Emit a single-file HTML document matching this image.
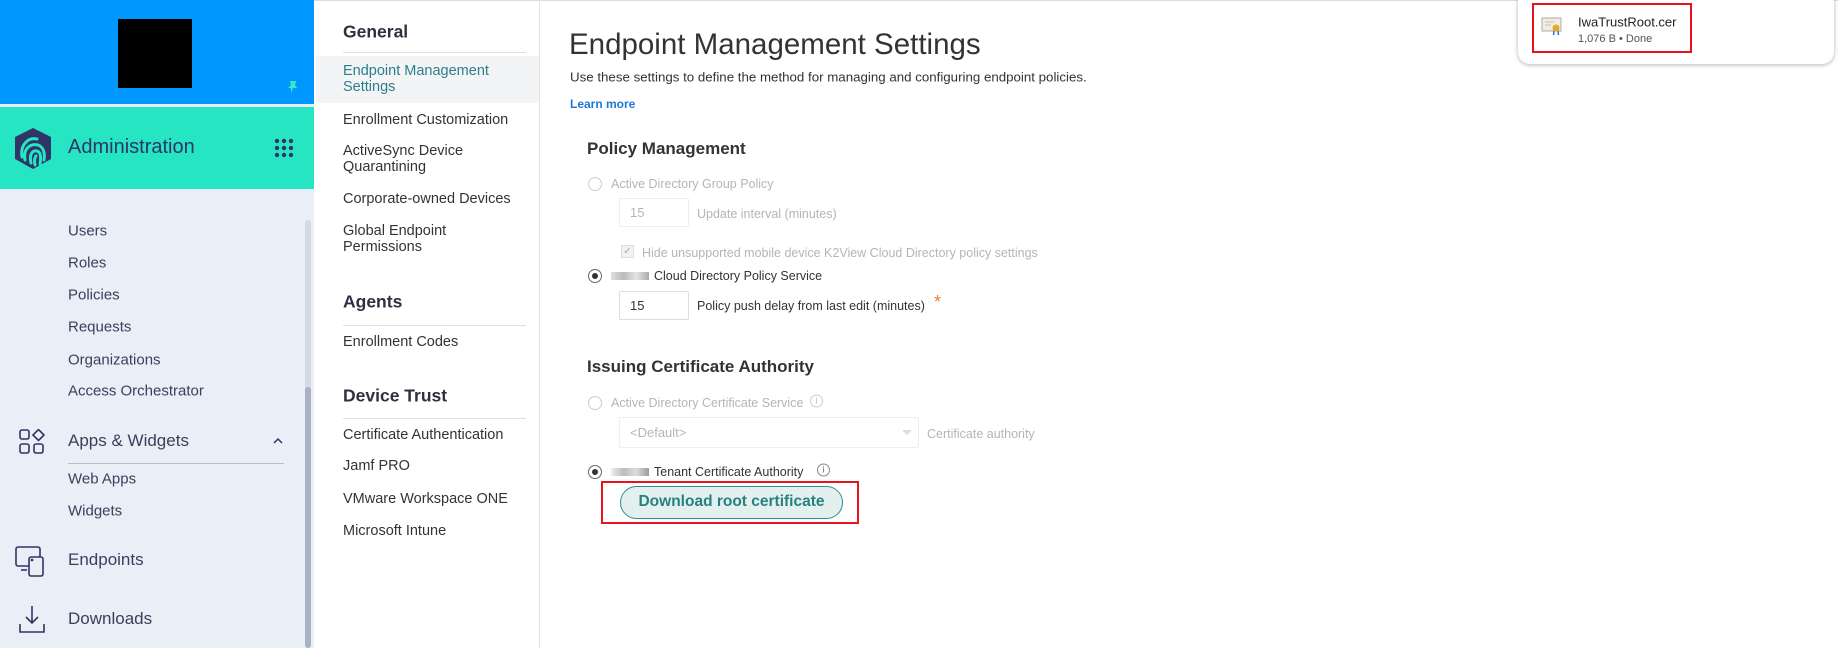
<!DOCTYPE html>
<html><head><meta charset="utf-8"><style>
*{margin:0;padding:0;box-sizing:border-box}
body{width:1838px;height:648px;overflow:hidden;background:#fff;font-family:"Liberation Sans","DejaVu Sans",sans-serif;color:#333;position:relative}
.a{position:absolute;white-space:nowrap}
.side{left:0;top:0;width:314px;height:648px;background:#eaeef6}
.si{left:68px;font-size:15px;color:#3b3f5c;transform:translateY(-50%)}
.c2{font-size:14.5px;color:#333;left:343px;transform:translateY(-50%)}
.h2{font-size:17.5px;font-weight:bold;color:#2f3140;left:343px;transform:translateY(-50%)}
.ln{height:1px;background:#dde1ea}
.lbl{font-size:12.5px;transform:translateY(-50%)}
.dis{color:#b5b5b5}
.radio{width:14px;height:14px;border:1px solid #ccc;border-radius:50%;transform:translateY(-50%)}
.radio.on{border-color:#666}
.radio.on::after{content:"";position:absolute;left:3px;top:3px;width:6px;height:6px;border-radius:50%;background:#333}
.inp{border:1px solid #ddd;border-radius:2px;font-size:13px;padding:6px 0 0 10px}
.blur{height:8px;background:linear-gradient(90deg,#ddd,#bbb,#e5e5e5,#aaa);transform:translateY(-50%)}
.info{width:13px;height:13px;border:1px solid #888;border-radius:50%;font-size:9px;text-align:center;line-height:11px;color:#666;transform:translateY(-50%)}
</style></head><body>
<div class="a" style="left:0;top:0;width:1838px;height:1px;background:#ddd"></div>
<div class="a side"></div>
<div class="a" style="left:0;top:0;width:314px;height:104px;background:#0098ff"></div>
<div class="a" style="left:118px;top:19px;width:74px;height:69px;background:#000"></div>
<svg class="a" style="left:286px;top:80px" width="12" height="14" viewBox="0 0 12 14"><path d="M4 1H10L9 5L11 8H7L5 13L5 8H2L5 5Z" fill="#3ee6c4"/></svg>
<div class="a" style="left:0;top:107px;width:314px;height:82px;background:#26e5c2"></div>
<svg class="a" style="left:12px;top:127px" width="42" height="43" viewBox="0 0 42 43"><path d="M21 1L39 10V32L21 42L3 32V10Z" fill="#2f3566"/><path d="M10 30C8 18 16 10 25 12M13 33C11 22 18 16 26 18C32 20 33 27 32 33M19 36C17 28 20 23 25 24C29 25 29 31 28 37M23 38C22 33 23 30 24 29" stroke="#26e5c2" stroke-width="3" fill="none" stroke-linecap="round"/></svg>
<div class="a" style="left:68px;top:136px;font-size:20px;color:#2f3566">Administration</div>
<svg class="a" style="left:274px;top:138px" width="20" height="20"><g fill="#2f3566"><circle cx="3" cy="3" r="2.2"/><circle cx="10" cy="3" r="2.2"/><circle cx="17" cy="3" r="2.2"/><circle cx="3" cy="10" r="2.2"/><circle cx="10" cy="10" r="2.2"/><circle cx="17" cy="10" r="2.2"/><circle cx="3" cy="17" r="2.2"/><circle cx="10" cy="17" r="2.2"/><circle cx="17" cy="17" r="2.2"/></g></svg>
<div class="a" style="left:305px;top:220px;width:6px;height:428px;background:#d5dbe6;border-radius:3px"></div>
<div class="a" style="left:305px;top:387px;width:6px;height:261px;background:#a9b1c2;border-radius:3px"></div>
<div class="a si" style="top:231px">Users</div>
<div class="a si" style="top:263px">Roles</div>
<div class="a si" style="top:295px">Policies</div>
<div class="a si" style="top:327px">Requests</div>
<div class="a si" style="top:360px">Organizations</div>
<div class="a si" style="top:391px">Access Orchestrator</div>
<svg class="a" style="left:19px;top:429px" width="26" height="26" viewBox="0 0 26 26" fill="none" stroke="#2f3566" stroke-width="1.6"><rect x="1" y="1" width="9" height="9" rx="2"/><rect x="1" y="15" width="9" height="9" rx="2"/><rect x="15" y="15" width="9" height="9" rx="2"/><path d="M19.5 0.5L25 6L19.5 11.5L14 6Z"/></svg>
<div class="a si" style="top:441px;font-size:17px">Apps &amp; Widgets</div>
<svg class="a" style="left:273px;top:437px" width="10" height="7"><path d="M1 6L5 2L9 6" stroke="#2f3566" stroke-width="1.5" fill="none"/></svg>
<div class="a" style="left:68px;top:463px;width:216px;height:1px;background:#b8bfce"></div>
<div class="a si" style="top:479px">Web Apps</div>
<div class="a si" style="top:511px">Widgets</div>
<svg class="a" style="left:15px;top:546px" width="32" height="32" viewBox="0 0 32 32" fill="none" stroke="#2f3566" stroke-width="1.6"><rect x="1" y="1" width="24" height="19" rx="2"/><path d="M6 24H12"/><rect x="14" y="11" width="14" height="19" rx="2" fill="#eaeef6"/><circle cx="17" cy="14" r=".6"/></svg>
<div class="a si" style="top:560px;font-size:17px">Endpoints</div>
<svg class="a" style="left:19px;top:605px" width="26" height="29" viewBox="0 0 26 29" fill="none" stroke="#2f3566" stroke-width="1.6"><path d="M13 1V18M7 12L13 18L19 12M1 19V27H25V19"/></svg>
<div class="a si" style="top:619px;font-size:17px">Downloads</div>

<div class="a" style="left:539px;top:0;width:1px;height:648px;background:#e3e3e3"></div>
<div class="a h2" style="top:32px">General</div>
<div class="a ln" style="left:343px;top:52px;width:183px"></div>
<div class="a" style="left:316px;top:56px;width:223px;height:47px;background:#f3f4f6"></div>
<div class="a" style="left:343px;top:63px;font-size:14.5px;color:#2b7f8a;line-height:16px">Endpoint Management<br>Settings</div>
<div class="a c2" style="top:120px">Enrollment Customization</div>
<div class="a" style="left:343px;top:143px;font-size:14.5px;line-height:16px">ActiveSync Device<br>Quarantining</div>
<div class="a c2" style="top:199px">Corporate-owned Devices</div>
<div class="a" style="left:343px;top:223px;font-size:14.5px;line-height:16px">Global Endpoint<br>Permissions</div>
<div class="a h2" style="top:302px">Agents</div>
<div class="a ln" style="left:343px;top:325px;width:183px"></div>
<div class="a c2" style="top:342px">Enrollment Codes</div>
<div class="a h2" style="top:396px">Device Trust</div>
<div class="a ln" style="left:343px;top:418px;width:183px"></div>
<div class="a c2" style="top:435px">Certificate Authentication</div>
<div class="a c2" style="top:466px">Jamf PRO</div>
<div class="a c2" style="top:499px">VMware Workspace ONE</div>
<div class="a c2" style="top:531px">Microsoft Intune</div>

<div class="a" style="left:569px;top:45px;font-size:29.5px;color:#333;transform:translateY(-50%)">Endpoint Management Settings</div>
<div class="a" style="left:570px;top:77px;font-size:13.3px;transform:translateY(-50%)">Use these settings to define the method for managing and configuring endpoint policies.</div>
<div class="a" style="left:570px;top:104px;font-size:12px;font-weight:bold;color:#1a7ad9;transform:translateY(-50%)">Learn more</div>
<div class="a" style="left:587px;top:149px;font-size:17px;font-weight:bold;transform:translateY(-50%)">Policy Management</div>
<div class="a radio" style="left:588px;top:184px"></div>
<div class="a lbl dis" style="left:611px;top:184px">Active Directory Group Policy</div>
<div class="a inp dis" style="left:619px;top:198px;width:70px;height:29px;border-color:#eee">15</div>
<div class="a lbl dis" style="left:697px;top:214px">Update interval (minutes)</div>
<div class="a" style="left:621px;top:245px;width:13px;height:13px;border:1px solid #ddd;background:#f2f2f2;color:#aaa;font-size:10px;line-height:11px;text-align:center">&#10003;</div>
<div class="a lbl dis" style="left:642px;top:253px">Hide unsupported mobile device K2View Cloud Directory policy settings</div>
<div class="a radio on" style="left:588px;top:276px"></div>
<div class="a blur" style="left:611px;top:276px;width:38px"></div>
<div class="a lbl" style="left:654px;top:276px">Cloud Directory Policy Service</div>
<div class="a inp" style="left:619px;top:291px;width:70px;height:29px">15</div>
<div class="a lbl" style="left:697px;top:306px">Policy push delay from last edit (minutes)</div>
<div class="a" style="left:934px;top:292px;color:#f07b2e;font-size:18px">*</div>

<div class="a" style="left:587px;top:367px;font-size:17px;font-weight:bold;transform:translateY(-50%)">Issuing Certificate Authority</div>
<div class="a radio" style="left:588px;top:403px"></div>
<div class="a lbl dis" style="left:611px;top:403px">Active Directory Certificate Service</div>
<div class="a info" style="left:810px;top:401px;border-color:#ccc;color:#bbb">i</div>
<div class="a inp dis" style="left:619px;top:417px;width:300px;height:31px;border-color:#eee;padding-top:7px">&lt;Default&gt;</div>
<div class="a" style="left:902px;top:430px;width:0;height:0;border-left:5px solid transparent;border-right:5px solid transparent;border-top:5px solid #ddd"></div>
<div class="a lbl dis" style="left:927px;top:434px">Certificate authority</div>
<div class="a radio on" style="left:588px;top:472px"></div>
<div class="a blur" style="left:611px;top:472px;width:38px;background:linear-gradient(90deg,#eee,#bbb,#ddd,#999)"></div>
<div class="a lbl" style="left:654px;top:472px">Tenant Certificate Authority</div>
<div class="a info" style="left:817px;top:470px">i</div>
<div class="a" style="left:601px;top:481px;width:258px;height:43px;border:2px solid #e8141b"></div>
<div class="a" style="left:620px;top:486px;width:223px;height:33px;border:1.5px solid #2a8f8f;border-radius:17px;background:#e4f0f0;color:#25827f;font-size:15.5px;font-weight:bold;text-align:center;line-height:30px">Download root certificate</div>

<div class="a" style="left:1518px;top:-10px;width:316px;height:74px;background:#fff;border-radius:12px;box-shadow:0 1px 4px rgba(0,0,0,.3)"></div>
<div class="a" style="left:1532px;top:3px;width:160px;height:50px;border:2px solid #e8141b"></div>
<svg class="a" style="left:1541px;top:16px" width="22" height="20" viewBox="0 0 22 20"><rect x="1" y="2" width="19" height="13" fill="#f1ece4" stroke="#b7a998"/><path d="M4 6H13M4 9H10" stroke="#c9bfb2"/><circle cx="15" cy="12" r="3.5" fill="#e2a92a"/><path d="M13 15L12.5 19M17 15L17.5 19" stroke="#3a6fd8" stroke-width="1.5"/></svg>
<div class="a" style="left:1578px;top:22px;font-size:13px;color:#222;transform:translateY(-50%)">IwaTrustRoot.cer</div>
<div class="a" style="left:1578px;top:39px;font-size:11px;color:#555;transform:translateY(-50%)">1,076 B • Done</div>
</body></html>
